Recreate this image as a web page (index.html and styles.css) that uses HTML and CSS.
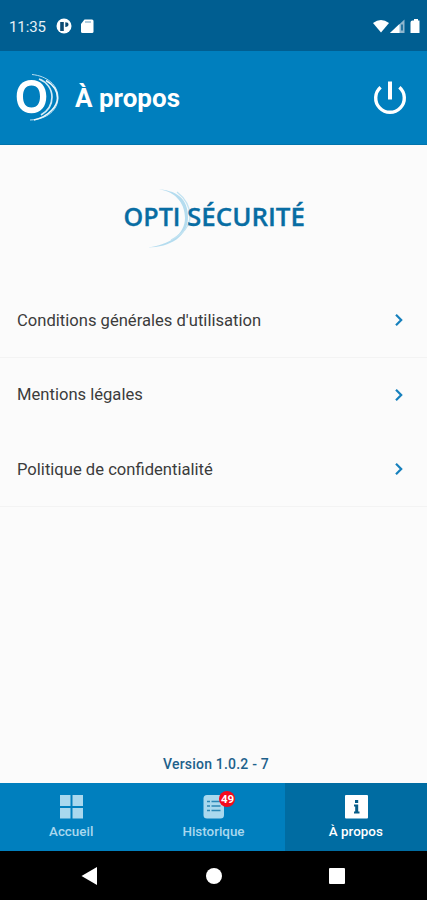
FILE: index.html
```html
<!DOCTYPE html>
<html lang="fr">
<head>
    <meta charset="utf-8">
    <title>À propos</title>
    <link rel="stylesheet" href="styles.css">
</head>

<body>

<div class="status-bar">
    <span class="time">11:35</span>
    <svg class="status-left" width="40" height="18" viewBox="0 0 40 18">
        <circle cx="8" cy="8" r="7.5" fill="#fff"/>
        <path d="M4.200 4h3.600v9H4.200zM9.300 4.300q3.200 0 3.200 2.300t-3.200 2.300z" fill="#0b4a73"/>
        <path d="M28.500 1.500h7.500q1.500 0 1.500 1.500v10.500q0 1.500-1.500 1.500h-9.500q-1.500 0-1.500-1.500V6z" fill="#fff"/>
        <path d="M29 4h6" stroke="#7fabc6" stroke-width="1.200"/>
    </svg>
    <svg class="status-right" width="50" height="18" viewBox="0 0 50 18">
        <path d="M0 5Q8-1 16 5L8 14.500z" fill="#fff"/>
        <path d="M31.500 1.500V15H17z" fill="#8fb6ce"/>
        <path d="M26.500 6v9H17z" fill="#fff"/>
        <path d="M29 6.500v6" stroke="#005e91" stroke-width="1.500"/>
        <path d="M39.500 2.500h1.500V1h4v1.500h1.500V15h-9V4.500q0-2 2-2z" fill="#fff"/>
    </svg>
</div>

<header class="header">
    <svg class="brand" width="44" height="50" viewBox="0 0 44 50">
        <path fill-rule="evenodd" d="M15.500 7C25 7 30.300 13.500 30.300 23.500S25 40.200 15.500 40.200.700 33.500.700 23.500 6 7 15.500 7zM15.500 12.500C9.500 12.500 7 17 7 23.500s2.500 11 8.500 11 8.500-4.500 8.500-11-2.500-11-8.500-11z" fill="#fff"/>
        <path d="M23 6C31 9 36 16 36 24S32 38 25 42" fill="none" stroke="#d4ebf6" stroke-width="1.700"/>
        <path d="M16 1.500C31 3 42 12 42 24.500S31 46.500 14 47" fill="none" stroke="#b9ddf0" stroke-width="1"/>
        <path d="M30 7.500C37 11.500 41.500 18 41.500 25S34 43.500 18 47" fill="none" stroke="#eef8fc" stroke-width="1.600"/>
    </svg>
    <h1>À propos</h1>
    <svg class="power" width="34" height="34" viewBox="0 0 34 34" fill="none" stroke="#fff">
        <path d="M7.600 6.200a14.300 14.300 0 1 0 18.800 0" stroke-width="3.400"/>
        <path d="M17 .500v18" stroke-width="4"/>
    </svg>
</header>

<main>
    <div class="logo">
        <svg width="190" height="64" viewBox="0 0 190 64">
            <path d="M36 2C54 3 65 15 65 31S50 58 27 60.500C51 60.500 68 49 68 30S56 3 36 2z" fill="#b4dcef"/>
            <path d="M57 5C66 12 70 19 70 29S63 47 51 53" fill="none" stroke="#c3e3f1" stroke-width="1.300"/>
            <text x="3.500" y="38.500" textLength="57" lengthAdjust="spacingAndGlyphs">OPTI</text>
            <text x="67" y="38.500" textLength="118" lengthAdjust="spacingAndGlyphs">SÉCURITÉ</text>
        </svg>
    </div>

    <ul class="menu">
        <li class="line">
            <span>Conditions générales d'utilisation</span>
            <svg class="chevron" width="10" height="14" viewBox="0 0 10 14"><path d="M2 1.800L7.200 7 2 12.200"/></svg>
        </li>
        <li>
            <span>Mentions légales</span>
            <svg class="chevron" width="10" height="14" viewBox="0 0 10 14"><path d="M2 1.800L7.200 7 2 12.200"/></svg>
        </li>
        <li class="line">
            <span>Politique de confidentialité</span>
            <svg class="chevron" width="10" height="14" viewBox="0 0 10 14"><path d="M2 1.800L7.200 7 2 12.200"/></svg>
        </li>
    </ul>

    <p class="version">Version 1.0.2 - 7</p>
</main>

<nav class="tabs">
    <div class="tab">
        <svg width="24" height="24" viewBox="0 0 24 24" fill="#a9d8ee">
            <path d="M1 0h10.500v11H1zM13.500 0H24v11H13.500zM1 13h10.500v10.500H1zM13.500 13H24v10.500H13.500z"/>
        </svg>
        <span>Accueil</span>
    </div>
    <div class="tab">
        <div class="tab-icon">
            <svg width="24" height="24" viewBox="0 0 24 24">
                <rect x="2.500" width="20.500" height="23.500" rx="3.500" fill="#a9d8ee"/>
                <path d="M6 6.500h3M10.500 6.500h9M6 11h3M10.500 11h9M6 15.500h3M10.500 15.500h9" stroke="#2b87b5" stroke-width="1.500"/>
            </svg>
            <span class="badge">49</span>
        </div>
        <span>Historique</span>
    </div>
    <div class="tab active">
        <svg width="24" height="24" viewBox="0 0 24 24">
            <rect x="1" y="0" width="23" height="23.500" rx="1" fill="#fff"/>
            <path d="M11 5h3.200v3H11zM10 9.500h4.200v7h1.300v2H10v-2h1.200v-5H10z" fill="#075d88"/>
        </svg>
        <span>À propos</span>
    </div>
</nav>

<div class="nav-bar">
    <svg width="18" height="20" viewBox="0 0 18 20"><path d="M.500 10L16 1v18z" fill="#fff"/></svg>
    <svg width="18" height="20" viewBox="0 0 18 20"><circle cx="9" cy="10" r="8" fill="#fff"/></svg>
    <svg width="18" height="20" viewBox="0 0 18 20"><rect x="1" y="2" width="16" height="16" rx="1" fill="#fff"/></svg>
</div>

</body>
</html>
```
FILE: styles.css
```css
* {
    box-sizing: border-box;
}

body {
    margin: 0;
    height: 900px;
    display: flex;
    flex-direction: column;
    background: #fbfbfb;
    font-family: Roboto, "Liberation Sans", sans-serif;
}

.status-bar {
    height: 51px;
    padding: 2px 4px 0 9px;
    display: flex;
    align-items: center;
    background: #005e91;
    color: #e6f0f5;
}

.time {
    width: 47px;
    font-size: 15px;
    font-weight: 400;
    letter-spacing: -0.1px;
}

.status-right {
    margin-left: auto;
}

.header {
    height: 94px;
    padding: 0 20px 0 16px;
    display: flex;
    align-items: center;
    background: #007fbe;
    border-bottom: 1px solid #0074ad;
    color: #fff;
}

.header h1 {
    margin: 0 0 0 15px;
    font-size: 26px;
    font-weight: 700;
    line-height: 30px;
}

.power {
    margin-left: auto;
}

main {
    flex: 1;
    display: flex;
    flex-direction: column;
}

.logo {
    height: 138px;
    padding: 42px 0 0 120px;
}

.logo text {
    font-family: "Open Sans", "Noto Sans", sans-serif;
    font-size: 25px;
    font-weight: 600;
    fill: #086da3;
    stroke: #086da3;
    stroke-width: 0.3px;
}

.menu {
    margin: 0;
    padding: 0;
    list-style: none;
}

.menu li {
    height: 74.5px;
    padding: 1px 23px 0 17px;
    display: flex;
    align-items: center;
    justify-content: space-between;
    border-bottom: 1px solid transparent;
    font-size: 16.6px;
    color: #3c3c3c;
}

.menu .line {
    border-bottom-color: #f3f3f3;
}

.chevron {
    fill: none;
    stroke: #1680bd;
    stroke-width: 2.2;
}

.version {
    margin: auto 0 10px;
    padding-left: 5px;
    text-align: center;
    font-size: 14px;
    font-weight: 500;
    line-height: 18px;
    letter-spacing: 0.2px;
    color: #1d618b;
}

.tabs {
    height: 68px;
    display: flex;
    background: #007fbe;
}

.tab {
    flex: 1;
    padding-top: 12px;
    display: flex;
    flex-direction: column;
    align-items: center;
    gap: 5px;
    font-size: 13.4px;
    font-weight: 500;
    line-height: 16px;
    color: #a9d8ee;
}

.tab svg {
    display: block;
}

.tab.active {
    background: #006ca2;
    color: #fff;
}

.tab-icon {
    position: relative;
}

.badge {
    position: absolute;
    top: -4px;
    left: 18px;
    width: 16px;
    height: 16px;
    border-radius: 50%;
    background: #f5091b;
    color: #fff;
    font-size: 11.5px;
    font-weight: 700;
    line-height: 16px;
    text-align: center;
}

.nav-bar {
    height: 49px;
    padding: 0 81px;
    display: flex;
    align-items: center;
    justify-content: space-between;
    background: #000;
}
```
